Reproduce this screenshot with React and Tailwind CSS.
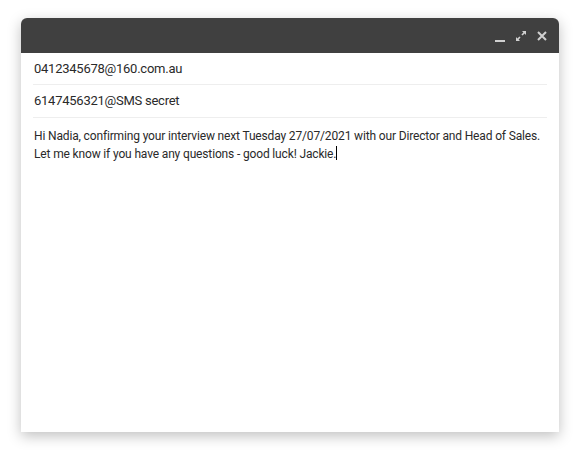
export default function App() {
  return (
    <div className="w-[580px] h-[450px] bg-white pt-[18px] pl-[21px]" style={{ fontFamily: 'Roboto, Arial, sans-serif' }}>
      <div className="w-[538px] h-[414px] bg-white rounded-t-[6px] shadow-[0_4px_14px_rgba(0,0,0,0.25)] flex flex-col">
        <div className="h-[35px] bg-[#404040] rounded-t-[6px] flex items-center justify-end pr-[11px] gap-[9px]">
          <svg width="12" height="12" viewBox="0 0 12 12" className="mt-[2px]">
            <rect x="1" y="9" width="10" height="2" fill="#d0d0d0" />
          </svg>
          <svg width="12" height="12" viewBox="0 0 12 12">
            <path d="M7 1h4v4l-1.4-1.4-2 2-1.2-1.2 2-2z M5 11H1V7l1.4 1.4 2-2 1.2 1.2-2 2z" fill="#d0d0d0" />
          </svg>
          <svg width="12" height="12" viewBox="0 0 12 12">
            <path d="M2 2l8 8M10 2l-8 8" stroke="#d0d0d0" strokeWidth="2" />
          </svg>
        </div>
        <div className="px-[12px] text-[13px] text-[#2a2a2a] tracking-[-0.25px]">
          <div className="h-[32px] flex items-center border-b border-[#eeeeee] pl-[1px]">0412345678@160.com.au</div>
          <div className="h-[33px] flex items-center border-b border-[#eeeeee] pl-[1px]">6147456321@SMS secret</div>
          <div className="pt-[9px] pl-[1px] text-[12px] leading-[18px] tracking-[-0.15px]">
            Hi Nadia, confirming your interview next Tuesday 27/07/2021 with our Director and Head of Sales. Let me know if you have any questions - good luck! Jackie.<span className="inline-block w-px h-[14px] bg-black align-[-2px]" />
          </div>
        </div>
      </div>
    </div>
  );
}
